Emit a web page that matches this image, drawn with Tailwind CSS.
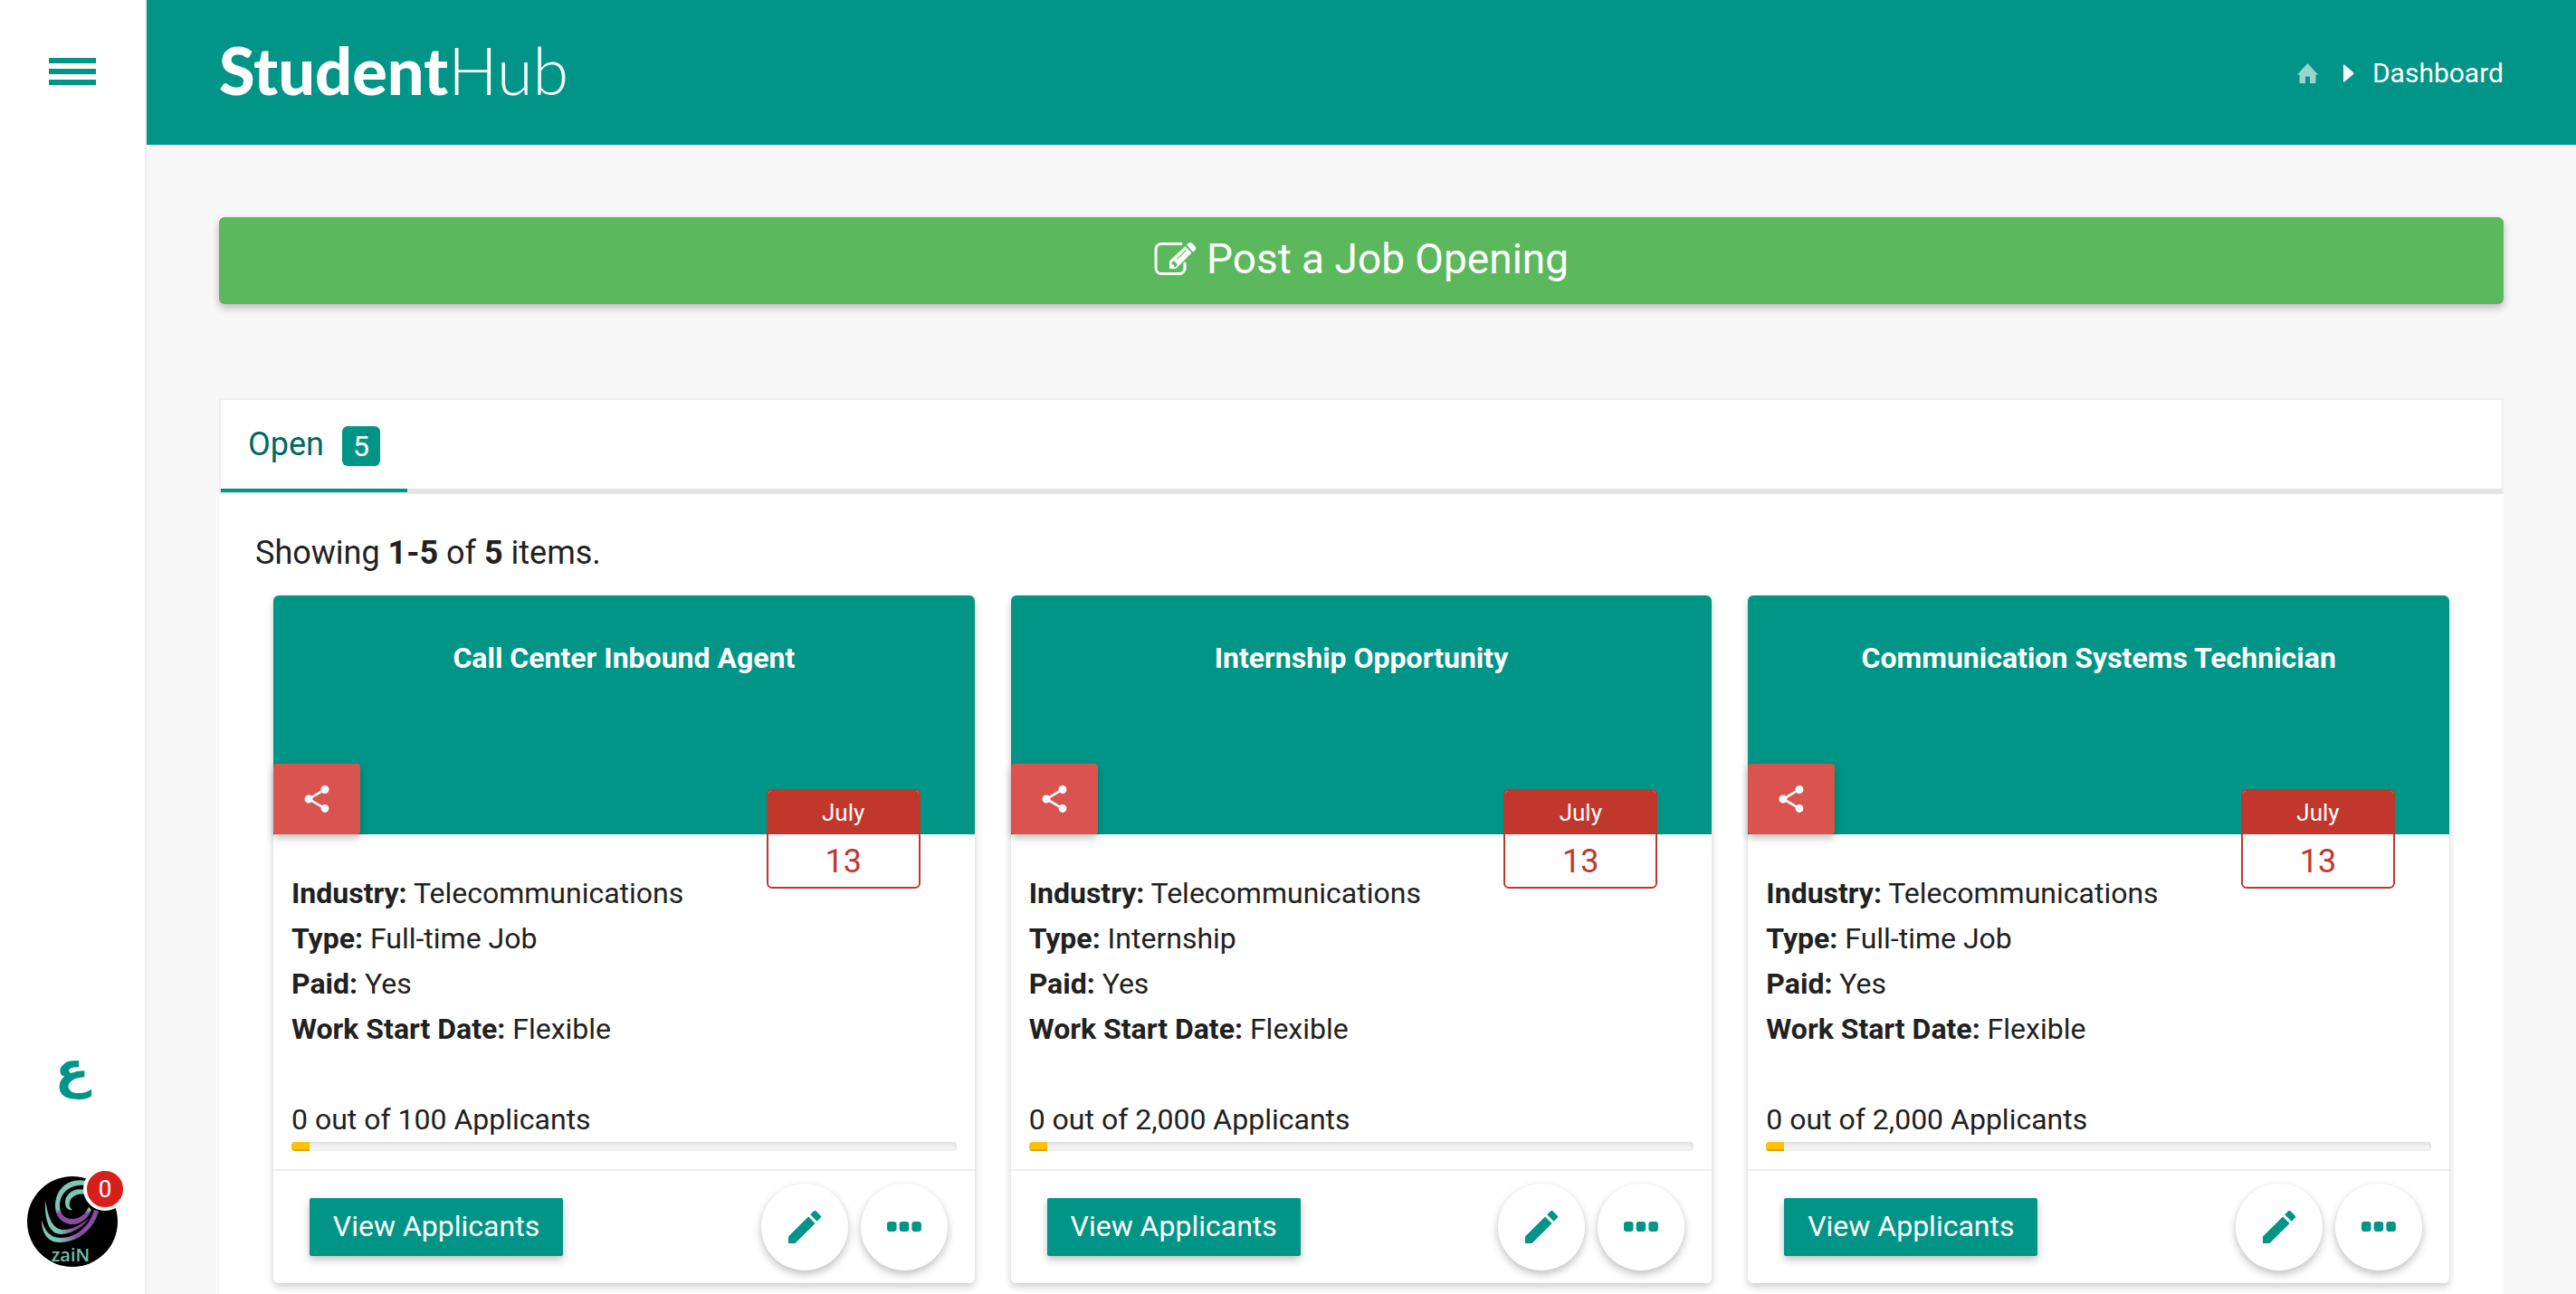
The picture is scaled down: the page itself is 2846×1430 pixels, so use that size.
<!DOCTYPE html>
<html lang="en">
<head>
<meta charset="utf-8">
<meta name="viewport" content="width=device-width, initial-scale=1">
<title>StudentHub Dashboard</title>
<script src="https://cdn.jsdelivr.net/npm/@tailwindcss/browser@4"></script>
</head>
<body class="flex h-screen overflow-hidden bg-[#f7f7f7] font-['Roboto',sans-serif] text-[32px] leading-[50px] text-[#212121]">

<svg class="hidden" aria-hidden="true">
  <symbol id="share" viewBox="0 0 24 24"><path d="M18 16.08c-.76 0-1.44.3-1.96.77L8.91 12.7c.05-.23.09-.46.09-.7s-.04-.47-.09-.7l7.05-4.11c.54.5 1.25.81 2.04.81 1.66 0 3-1.34 3-3s-1.34-3-3-3-3 1.34-3 3c0 .24.04.47.09.7L8.04 9.81C7.5 9.31 6.79 9 6 9c-1.66 0-3 1.34-3 3s1.34 3 3 3c.79 0 1.5-.31 2.04-.81l7.12 4.16c-.05.21-.08.43-.08.65 0 1.61 1.31 2.92 2.92 2.92s2.92-1.31 2.92-2.92-1.31-2.92-2.92-2.92z"/></symbol>
  <symbol id="pencil" viewBox="0 0 36 36"><path d="M0 28.500V36h7.500L29.600 13.900l-7.500-7.500zM35.400 8.100a2 2 0 0 0 0-2.800L30.700.6a2 2 0 0 0-2.800 0l-3.700 3.700 7.500 7.500z"/></symbol>
  <symbol id="dots" viewBox="0 0 38 12"><rect width="10.500" height="11" rx="3"/><rect x="13.700" width="10.500" height="11" rx="3"/><rect x="27.400" width="10.500" height="11" rx="3"/></symbol>
</svg>

<aside class="flex w-[162px] shrink-0 flex-col items-center border-r-2 border-[#eee] bg-white">
  <button class="mt-16 flex w-[52px] flex-col gap-1.5" aria-label="Menu">
    <span class="h-1.5 w-full bg-[#009587]"></span>
    <span class="h-1.5 w-full bg-[#009587]"></span>
    <span class="h-1.5 w-full bg-[#009587]"></span>
  </button>
  <a href="#" lang="ar" class="mt-auto mb-20 font-['DejaVu_Sans',sans-serif] text-[56px] leading-[76px] font-bold text-[#009587]">ع</a>
  <a href="#" class="relative mb-[30px] size-[100px]" aria-label="Zain account, 0 notifications">
    <svg class="size-full" viewBox="0 0 100 100">
      <defs><linearGradient id="swirl" x1="0" y1="0" x2="1" y2="0"><stop offset=".3" stop-color="#7cc7b4"/><stop offset=".65" stop-color="#8a4c9e"/></linearGradient>
      <linearGradient id="ring" x1="0" y1="0" x2="0" y2="1"><stop offset=".66" stop-color="#7cc7b4"/><stop offset=".76" stop-color="#8a4c9e"/></linearGradient></defs>
      <circle cx="50" cy="50" r="50"/>
      <path fill="url(#ring)" d="M66 5C44 1 31 15 31 33c0 12 8 20 19 20 9 0 17-6 21-16l-3-3c-4 8-10 13-18 13-9 0-14-6-14-14C36 19 46 8 66 10z"/>
      <path fill="#7cc7b4" d="M64 15c-13-3-22 5-22 14 0 6 4 9 8 8-3-2-4-5-3-8 1-6 8-11 17-9z"/>
      <path fill="url(#swirl)" d="M20 26c-1 22 4 38 18 38 14-1 25-10 31-18-9 7-19 13-29 13-12 0-17-14-20-33z"/>
      <path fill="url(#swirl)" d="M16 48c0 14 6 25 20 25 22 0 39-17 43-35l-5-1c-5 18-20 31-37 31-12 0-18-9-21-20z"/>
      <text x="48" y="94" text-anchor="middle" font-family="Open Sans, sans-serif" font-size="20" font-weight="600" fill="#6cc0a8">zaiN</text>
    </svg>
    <span class="absolute -top-2.5 -right-2.5 flex size-12 items-center justify-center rounded-full border-4 border-white bg-[#d8201a] text-[26px] leading-none text-white">0</span>
  </a>
</aside>

<div class="flex min-w-0 flex-1 flex-col">
  <header class="flex h-40 shrink-0 items-center justify-between bg-[#009587] px-20 text-white">
    <a href="#" class="flex items-center pb-1.5 font-['Lato',sans-serif] text-[72px] leading-[84px]"><span class="font-black">Student</span><span class="font-light">Hub</span></a>
    <nav class="flex items-center pt-0.5 text-[30px] leading-10" aria-label="Breadcrumb">
      <a href="#" aria-label="Home"><svg class="h-[22px] w-[23px] fill-white/60" viewBox="0 0 23 22"><path d="M11.500 0 23 12.500h-2.500V22H14v-7.500H9V22H2.500v-9.500H0z"/></svg></a>
      <svg class="mr-5 ml-7 h-5 w-3 fill-white" viewBox="0 0 12 20"><path d="M0 1Q0 0 1 .5L11 9q1 1 0 2L1 19.500Q0 20 0 19z"/></svg>
      <a href="#">Dashboard</a>
    </nav>
  </header>

  <main class="flex min-h-0 flex-1 flex-col overflow-hidden px-20 pt-20">
    <button class="flex h-24 shrink-0 items-center justify-center gap-2.5 rounded-md bg-[#5cb85c] pb-1 text-[46px] text-white shadow-[0_4px_8px_rgba(0,0,0,0.25)]">
      <svg class="h-9 w-12 fill-white" viewBox="0 0 48 36"><path d="M34 23v5.500a6 6 0 0 1-6 6H8a6 6 0 0 1-6-6v-21a6 6 0 0 1 6-6h22" fill="none" stroke="#fff" stroke-width="3" stroke-linecap="round"/><path fill-rule="evenodd" d="M17 20.500 34.500 4l7 7.500L24 29h-7zM19.500 22v2.500H22V27h1.500l2.500-2.500-4-4.500zM25 18l10-10 .8.8-10 10zM36 2.600 38 .8q2-1.500 4 0l3.500 3.700q1.500 2 0 4L43 10.500z"/></svg>
      <span>Post a Job Opening</span>
    </button>

    <section class="mt-26 bg-white">
      <div class="flex h-[106px] border-2 border-b-6 border-[#eee] border-b-[#e5e5e5]">
        <a href="#" class="z-10 -mb-1 flex h-[102px] items-center gap-5 border-b-4 border-[#009587] px-[30px] text-[36px] text-[#00695f]">
          <span>Open</span>
          <span class="mt-1 flex h-11 w-[42px] items-center justify-center rounded-md bg-[#009587] text-[32px] text-white">5</span>
        </a>
      </div>
      <p class="px-10 pt-10 pb-[22px] text-[36px]">Showing <b>1-5</b> of <b>5</b> items.</p>
      <div id="jobs" class="grid grid-cols-3 gap-10 px-[60px] pb-10"></div>
    </section>
  </main>
</div>

<template id="job">
  <article class="rounded-md bg-white shadow-[0_4px_8px_rgba(0,0,0,0.2)]">
    <div class="relative flex h-66 items-start justify-center rounded-t-md bg-[#009587] pt-11 text-white">
      <h2 data-title class="font-bold"></h2>
      <button aria-label="Share" class="absolute bottom-0 left-0 flex h-[78px] w-24 items-center justify-center rounded bg-[#d9534f] shadow-[0_4px_8px_rgba(0,0,0,0.25)]"><svg class="size-9 fill-white"><use href="#share"/></svg></button>
      <time class="absolute -bottom-[60px] right-[60px] w-[170px] overflow-hidden rounded-md border-2 border-[#c1372c] bg-white text-center">
        <span class="block h-12 bg-[#c1372c] text-[26px] leading-[48px]">July</span>
        <span class="block h-[58px] text-[36px] leading-[60px] text-[#c1372c]">13</span>
      </time>
    </div>
    <div class="border-b-2 border-[#eee] px-5 pt-10 pb-5">
      <p><b>Industry:</b> Telecommunications</p>
      <p><b>Type:</b> <span data-type></span></p>
      <p><b>Paid:</b> Yes</p>
      <p><b>Work Start Date:</b> Flexible</p>
      <p class="mt-[50px]">0 out of <span data-max></span> Applicants</p>
      <div class="h-2.5 overflow-hidden rounded bg-[#f3f3f3] shadow-[inset_0_2px_4px_rgba(0,0,0,0.1)]"><div class="h-full w-5 border-b-2 border-[#dea600] bg-[#ffc107]"></div></div>
    </div>
    <div class="flex items-center py-3.5 pr-[30px] pl-10">
      <button class="h-16 w-[280px] rounded-xs bg-[#009587] pb-0.5 text-white shadow-[0_4px_8px_rgba(0,0,0,0.25)]">View Applicants</button>
      <div class="ml-auto flex gap-3.5">
        <button aria-label="Edit" class="flex size-24 items-center justify-center rounded-full bg-white shadow-[0_4px_10px_rgba(0,0,0,0.25)]"><svg class="size-9 fill-[#009587]"><use href="#pencil"/></svg></button>
        <button aria-label="More" class="flex size-24 items-center justify-center rounded-full bg-white shadow-[0_4px_10px_rgba(0,0,0,0.25)]"><svg class="h-3 w-[38px] fill-[#009587]"><use href="#dots"/></svg></button>
      </div>
    </div>
  </article>
</template>
<script>
  const jobs = [
    ["Call Center Inbound Agent", "Full-time Job", "100"],
    ["Internship Opportunity", "Internship", "2,000"],
    ["Communication Systems Technician", "Full-time Job", "2,000"],
  ];
  const template = document.getElementById("job");
  for (const [title, type, max] of jobs) {
    const card = template.content.cloneNode(true);
    card.querySelector("[data-title]").textContent = title;
    card.querySelector("[data-type]").textContent = type;
    card.querySelector("[data-max]").textContent = max;
    document.getElementById("jobs").append(card);
  }
</script>
</body>
</html>
